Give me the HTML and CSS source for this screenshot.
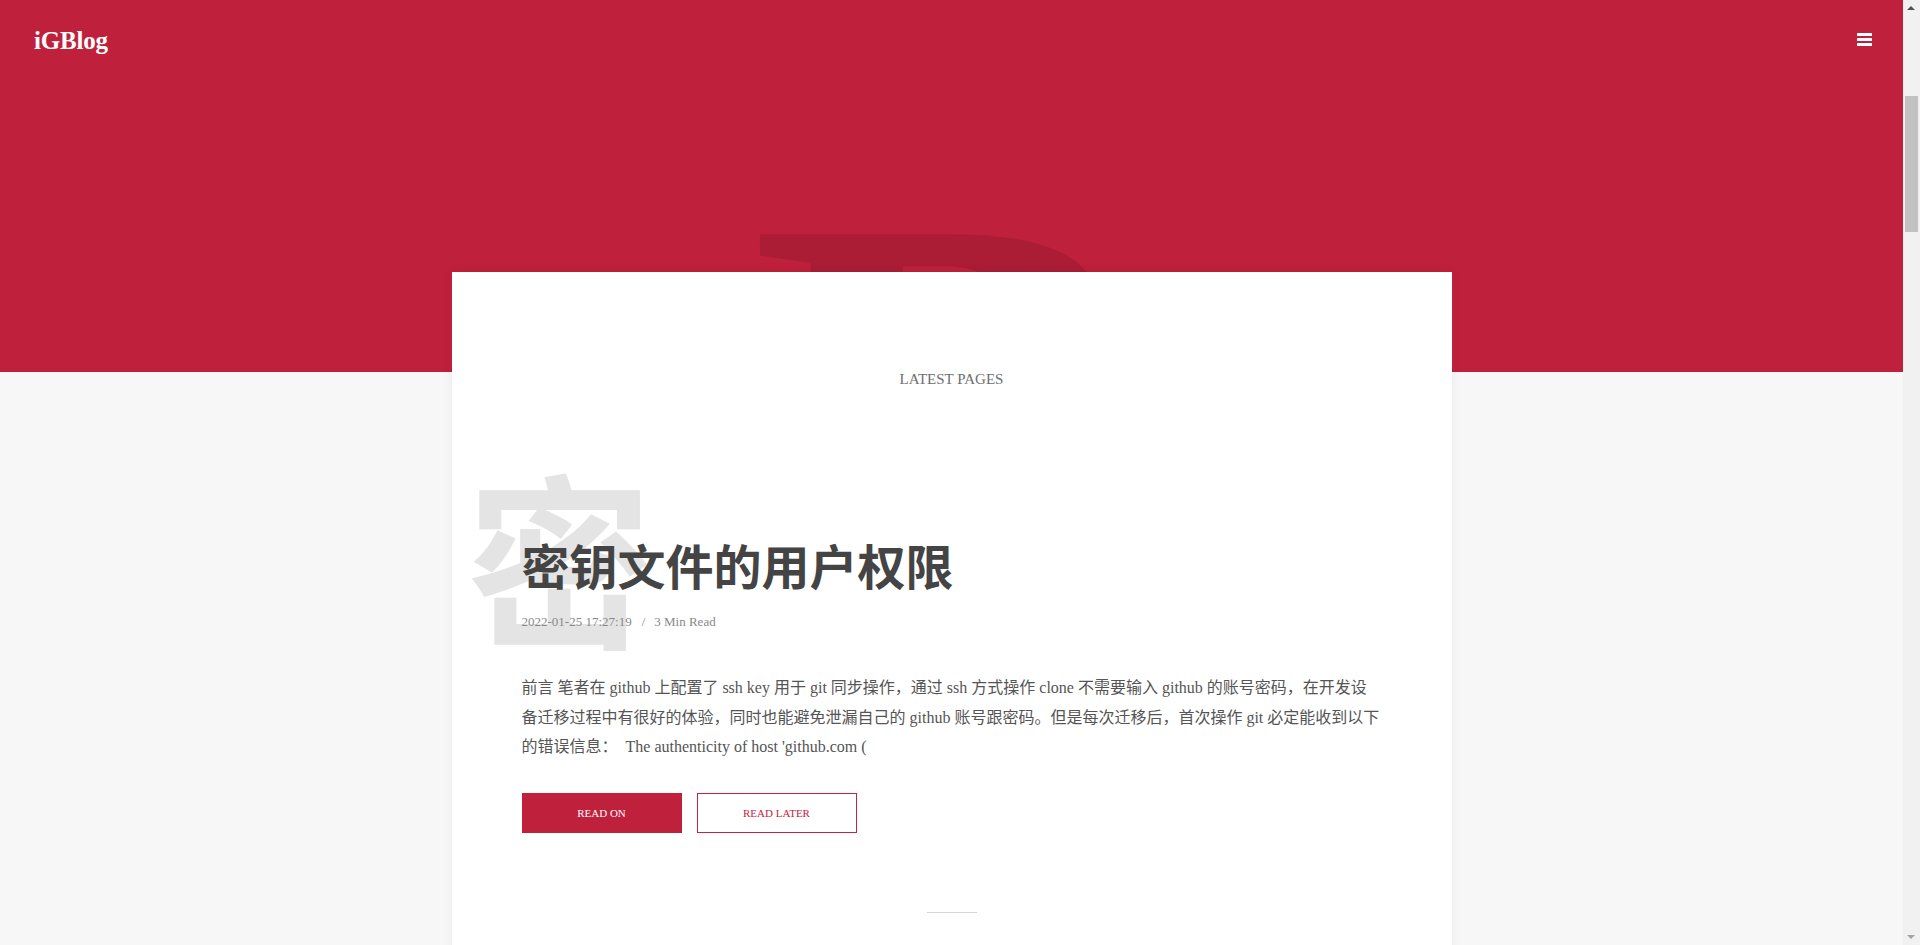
FILE: index.html
```html
<!DOCTYPE html>
<html lang="zh-CN">
<head>
<meta charset="utf-8">
<title>iGBlog</title>
<link rel="stylesheet" href="styles.css">
</head>
<body>
<div class="page">
  <header class="hero">
    <nav class="nav">
      <a class="logo" href="#">iGBlog</a>
      <button class="menu-btn" aria-label="menu"><span></span><span></span><span></span></button>
    </nav>
    <div class="hero-letter">B</div>
  </header>

  <main class="card">
    <div class="section-label">LATEST PAGES</div>

    <article class="post">
      <div class="post-watermark">密</div>
      <h2 class="post-title">密钥文件的用户权限</h2>
      <div class="post-meta">2022-01-25 17:27:19<span class="sep">/</span>3 Min Read</div>
      <p class="post-excerpt">前言 笔者在 github 上配置了 ssh key 用于 git 同步操作，通过 ssh 方式操作 clone 不需要输入 github 的账号密码，在开发设备迁移过程中有很好的体验，同时也能避免泄漏自己的 github 账号跟密码。但是每次迁移后，首次操作 git 必定能收到以下的错误信息：&nbsp; The authenticity of host 'github.com (</p>
      <div class="post-actions">
        <a class="btn btn-solid" href="#">READ ON</a>
        <a class="btn btn-outline" href="#">READ LATER</a>
      </div>
    </article>

    <div class="divider"></div>
  </main>
</div>

<div class="scrollbar">
  <div class="sb-arrow sb-up"></div>
  <div class="sb-track"><div class="sb-thumb"></div></div>
  <div class="sb-arrow sb-down"></div>
</div>
</body>
</html>
```

FILE: styles.css
```css
html, body {
  margin: 0;
  padding: 0;
  height: 100%;
  overflow: hidden;
}

body {
  background: #f7f7f7;
  font-family: "Liberation Serif", "Noto Sans CJK SC", serif;
  color: #555;
}

.page {
  width: calc(100% - 17px);
}

.hero {
  position: relative;
  height: 372px;
  background: #bf203b;
  overflow: hidden;
}

.nav {
  position: relative;
  z-index: 2;
  height: 80px;
  display: flex;
  align-items: center;
  justify-content: space-between;
  padding: 0 31px 0 34px;
}

.logo {
  color: #fff;
  text-decoration: none;
  font-weight: 700;
  font-size: 25px;
  letter-spacing: -0.2px;
  margin-top: 2px;
}

.menu-btn {
  display: flex;
  flex-direction: column;
  gap: 2px;
  width: 15px;
  padding: 0;
  margin: 0 0 1px;
  border: 0;
  background: transparent;
}

.menu-btn span {
  display: block;
  height: 3px;
  background: #fff;
  border-radius: 0.5px;
}

.hero-letter {
  position: absolute;
  left: 750px;
  top: 125px;
  font-size: 600px;
  line-height: 600px;
  font-weight: 700;
  color: rgba(0, 0, 0, 0.1);
  pointer-events: none;
}

.card {
  position: relative;
  z-index: 1;
  box-sizing: border-box;
  width: 1000px;
  margin: -100px auto 0;
  padding: 97px 70px 300px;
  background: #fff;
  box-shadow: 0 0 12px rgba(0, 0, 0, 0.05);
}

.section-label {
  text-align: center;
  font-size: 15px;
  line-height: 20px;
  color: #6e6e6e;
}

.post {
  position: relative;
  margin-top: 150px;
}

.post-watermark {
  position: absolute;
  left: -55px;
  top: -60px;
  font-size: 186px;
  line-height: 186px;
  font-weight: 700;
  color: #e4e4e4;
  z-index: 0;
  user-select: none;
}

.post-title {
  position: relative;
  z-index: 1;
  margin: 0;
  font-size: 48px;
  line-height: 60px;
  font-weight: 700;
  color: #444;
}

.post-meta {
  position: relative;
  z-index: 1;
  margin-top: 13px;
  font-size: 13px;
  line-height: 20px;
  color: #888;
}

.post-meta .sep {
  margin: 0 9px 0 10px;
}

.post-excerpt {
  position: relative;
  z-index: 1;
  margin: 41px 0 0;
  font-size: 16px;
  line-height: 29.5px;
  color: #555;
}

.post-actions {
  display: flex;
  gap: 15px;
  margin-top: 31px;
}

.btn {
  box-sizing: border-box;
  width: 160px;
  height: 40px;
  display: flex;
  align-items: center;
  justify-content: center;
  font-size: 11px;
  text-decoration: none;
}

.btn-solid {
  background: #bf203b;
  color: #fff;
}

.btn-outline {
  border: 1px solid #c8223e;
  color: #c8223e;
  background: #fff;
}

.divider {
  width: 50px;
  height: 1px;
  margin: 79px auto 0;
  background: #d6d6d6;
}

.scrollbar {
  position: fixed;
  top: 0;
  right: 0;
  width: 17px;
  height: 100%;
  background: #f1f1f1;
  display: flex;
  flex-direction: column;
}

.sb-arrow {
  height: 17px;
  position: relative;
}

.sb-up::after,
.sb-down::after {
  content: "";
  position: absolute;
  left: 4px;
  border-left: 4px solid transparent;
  border-right: 4px solid transparent;
}

.sb-up::after {
  top: 6px;
  border-bottom: 4px solid #505050;
}

.sb-down::after {
  top: 7px;
  border-top: 4px solid #a3a3a3;
}

.sb-track {
  flex: 1;
  padding-top: 79px;
}

.sb-thumb {
  width: 13px;
  margin-left: 2px;
  height: 136px;
  background: #c1c1c1;
}
```
